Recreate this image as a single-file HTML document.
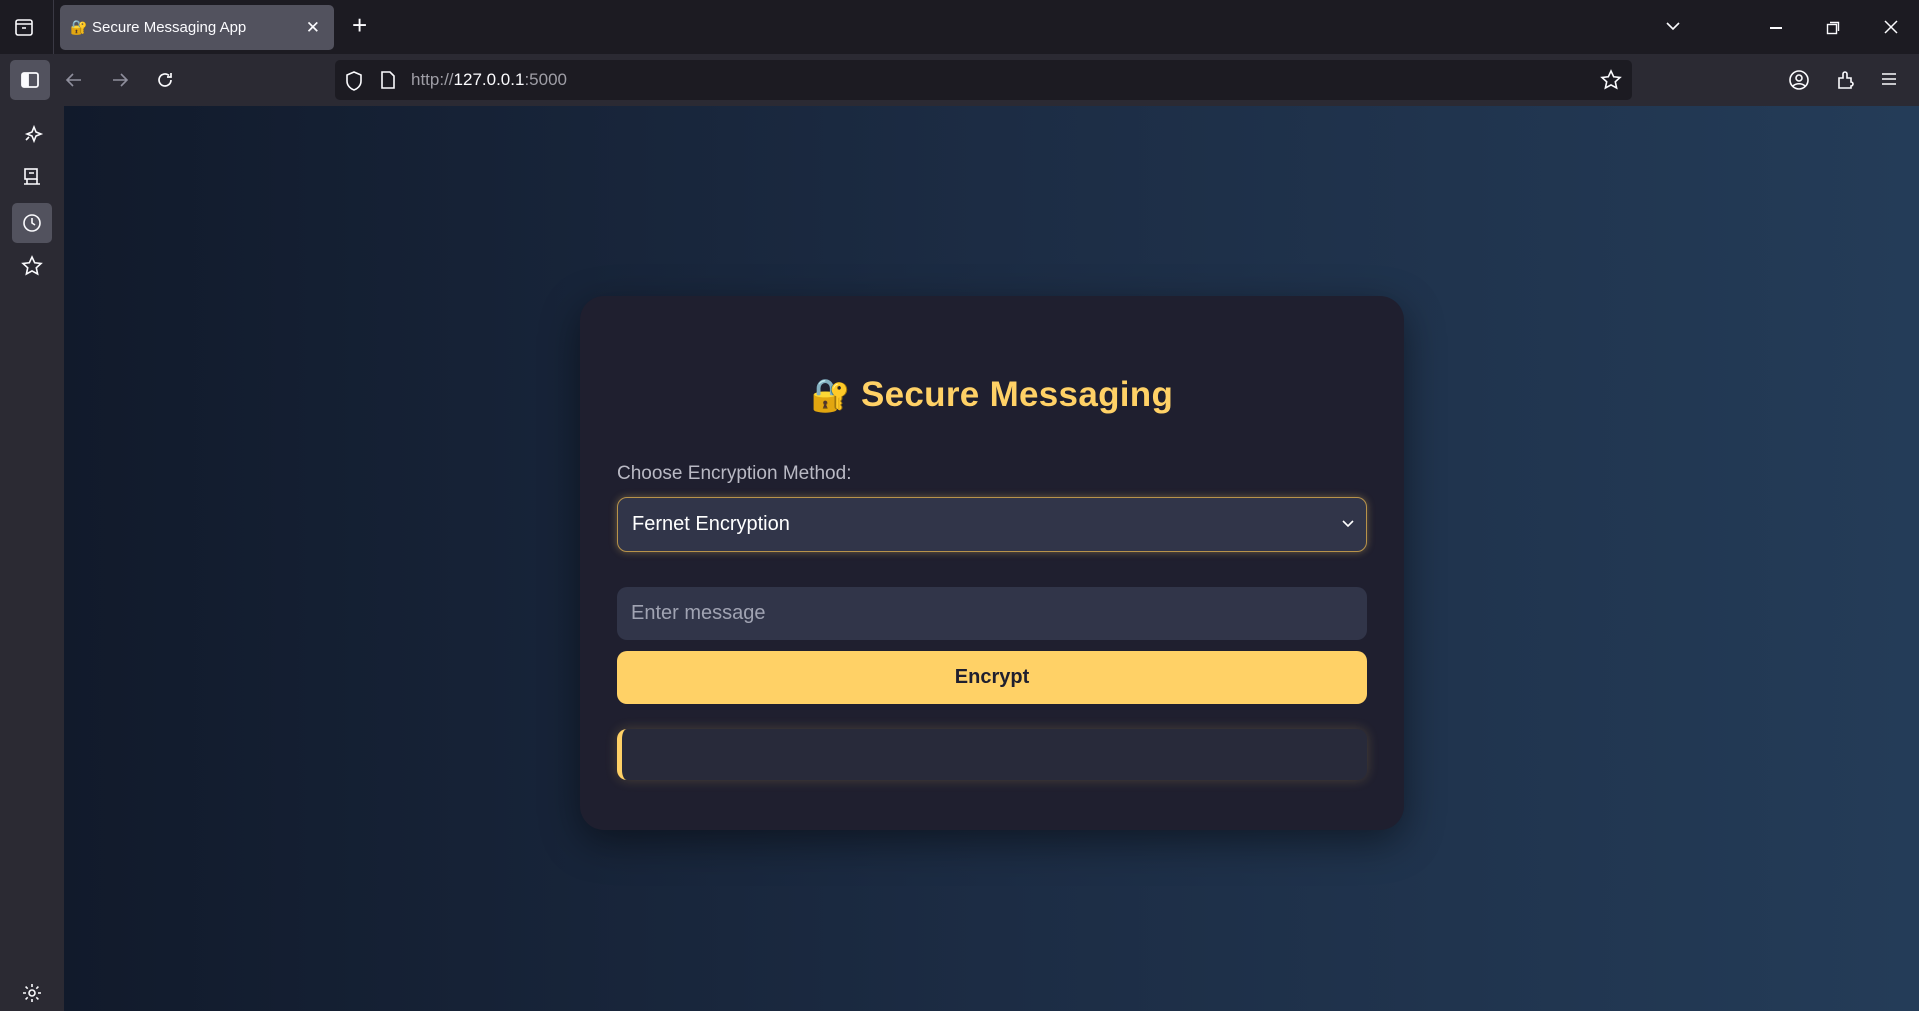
<!DOCTYPE html>
<html><head><meta charset="utf-8"><style>
*{box-sizing:border-box;margin:0;padding:0}
body{width:1919px;height:1011px;overflow:hidden;background:#1c1b22;font-family:"Liberation Sans",sans-serif;position:relative}
.tabbar{position:absolute;left:0;top:0;width:1919px;height:54px;background:#1c1b22}
.tab{position:absolute;left:60px;top:5px;width:274px;height:45px;background:#52525e;border-radius:5px;color:#fbfbfe;font-size:15px;line-height:45px;padding-left:32px}
.nav{position:absolute;left:0;top:54px;width:1919px;height:52px;background:#2b2a33}
.url{position:absolute;left:335px;top:6px;width:1297px;height:40px;background:#1c1b22;border-radius:5px;color:#9f9ea6;font-size:17px;line-height:40px;padding-left:76px}
.side{position:absolute;left:0;top:106px;width:64px;height:905px;background:#2b2a33}
.main{position:absolute;left:64px;top:106px;width:1855px;height:905px;background:linear-gradient(90deg,#111a2b,#1c2c44 50%,#243c58)}
.card{position:absolute;left:516px;top:190px;width:824px;height:534px;background:#1f1f2f;border-radius:24px;box-shadow:0 12px 40px rgba(0,0,0,.45)}
h1{position:absolute;left:0;width:100%;top:79px;text-align:center;color:#ffd166;font-size:35px;font-weight:bold;font-family:"Liberation Sans",sans-serif;letter-spacing:0.3px}
.lbl{position:absolute;left:37px;top:167px;color:#b9b9c4;font-size:19px}
.sel{position:absolute;left:37px;top:201px;width:750px;height:55px;background:#313549;border:1.5px solid #b8934a;border-radius:10px;box-shadow:0 0 8px rgba(255,209,102,.35);color:#fff;font-size:20px;line-height:52px;padding-left:14px}
.inp{position:absolute;left:37px;top:291px;width:750px;height:53px;background:#313549;border-radius:10px;color:#a0a3b2;font-size:20px;line-height:53px;padding-left:14px}
.btn{position:absolute;left:37px;top:355px;width:750px;height:53px;background:#ffd166;border-radius:10px;color:#1f1f2f;font-size:20px;font-weight:bold;text-align:center;line-height:53px}
.out{position:absolute;left:37px;top:433px;width:750px;height:51px;background:#282a3a;border-left:5px solid #ffd166;border-radius:10px;box-shadow:0 0 12px rgba(255,209,102,.2)}
svg{position:absolute}
</style></head><body>
<div class="tabbar">
<svg style="left:14px;top:17px" width="20" height="20" viewBox="0 0 20 20" fill="none" stroke="#fbfbfe" stroke-width="1.6"><rect x="2" y="3" width="16" height="15" rx="2"/><path d="M2 7h16M8 11h4"/></svg>
<div style="position:absolute;left:53px;top:0;width:1px;height:54px;background:#3a3944"></div>
<div class="tab"><span style="position:absolute;left:10px;top:0;font-size:14px">🔐</span>Secure Messaging App<span style="position:absolute;right:14px;top:0;font-size:17px">✕</span></div>
<div style="position:absolute;left:352px;top:10px;color:#fbfbfe;font-size:26px">+</div>
<svg style="left:1665px;top:20px" width="16" height="12" viewBox="0 0 16 12" fill="none" stroke="#fbfbfe" stroke-width="1.6"><path d="M2 3l6 6 6-6"/></svg>
<div style="position:absolute;left:1770px;top:27px;width:12px;height:1.5px;background:#fbfbfe"></div>
<svg style="left:1826px;top:21px" width="14" height="14" viewBox="0 0 14 14" fill="none" stroke="#fbfbfe" stroke-width="1.4"><rect x="1.5" y="3.5" width="9" height="9"/><path d="M4 1.5h8.5V10"/></svg>
<svg style="left:1884px;top:20px" width="14" height="14" viewBox="0 0 14 14" stroke="#fbfbfe" stroke-width="1.5"><path d="M1 1l12 12M13 1L1 13"/></svg>
</div>
<div class="nav">
<div style="position:absolute;left:10px;top:6px;width:40px;height:40px;background:#52525e;border-radius:5px"></div>
<svg style="left:20px;top:16px" width="20" height="20" viewBox="0 0 20 20" fill="none" stroke="#fbfbfe" stroke-width="1.8"><rect x="2" y="3" width="16" height="14" rx="2"/><rect x="3" y="4" width="5" height="12" fill="#fbfbfe"/></svg>
<svg style="left:64px;top:16px" width="20" height="20" viewBox="0 0 20 20" fill="none" stroke="#8f8f9d" stroke-width="1.6"><path d="M17 10H3M9 4l-6 6 6 6"/></svg>
<svg style="left:110px;top:16px" width="20" height="20" viewBox="0 0 20 20" fill="none" stroke="#8f8f9d" stroke-width="1.6"><path d="M3 10h14M11 4l6 6-6 6"/></svg>
<svg style="left:155px;top:16px" width="20" height="20" viewBox="0 0 20 20" fill="none" stroke="#fbfbfe" stroke-width="1.7"><path d="M16 10a6 6 0 1 1-2-4.5M16 3v4h-4"/></svg>
<div class="url"><span>http://</span><span style="color:#fbfbfe">127.0.0.1</span>:5000</div>
<svg style="left:344px;top:16px" width="20" height="22" viewBox="0 0 20 22" fill="none" stroke="#fbfbfe" stroke-width="1.6"><path d="M10 2l7 3v6c0 5-4 8-7 9-3-1-7-4-7-9V5z"/></svg>
<svg style="left:380px;top:16px" width="16" height="20" viewBox="0 0 16 20" fill="none" stroke="#fbfbfe" stroke-width="1.6"><path d="M2 2h8l4 4v12H2z"/></svg>
<svg style="left:1600px;top:15px" width="22" height="22" viewBox="0 0 22 22" fill="none" stroke="#fbfbfe" stroke-width="1.6"><path d="M11 2l2.7 5.8 6.3.7-4.7 4.3 1.3 6.2L11 15.9 5.4 19l1.3-6.2L2 8.5l6.3-.7z"/></svg>
<svg style="left:1788px;top:15px" width="22" height="22" viewBox="0 0 22 22" fill="none" stroke="#fbfbfe" stroke-width="1.6"><circle cx="11" cy="11" r="9"/><circle cx="11" cy="9" r="3"/><path d="M5 17c3-3 9-3 12 0"/></svg>
<svg style="left:1835px;top:15px" width="22" height="22" viewBox="0 0 22 22" fill="none" stroke="#fbfbfe" stroke-width="1.6"><path d="M4 19V9h4V5a2 2 0 0 1 4 0v4h4v4a2 2 0 0 1 0 4v2z"/></svg>
<svg style="left:1880px;top:17px" width="18" height="16" viewBox="0 0 18 16" stroke="#fbfbfe" stroke-width="1.6"><path d="M2 3h14M2 8h14M2 13h14"/></svg>
</div>
<div class="side">
<svg style="left:22px;top:17px" width="22" height="22" viewBox="0 0 22 22" fill="none" stroke="#fbfbfe" stroke-width="1.6"><path d="M12 4l2 5 5 2-5 2-2 5-2-5-5-2 5-2zM4 17l3-3"/></svg>
<svg style="left:22px;top:61px" width="20" height="20" viewBox="0 0 20 20" fill="none" stroke="#fbfbfe" stroke-width="1.6"><rect x="3" y="2" width="12" height="10"/><path d="M2 17h16M5 12v5M15 12v5M7 6h5"/></svg>
<div style="position:absolute;left:12px;top:97px;width:40px;height:40px;background:#52525e;border-radius:5px"></div>
<svg style="left:22px;top:107px" width="20" height="20" viewBox="0 0 20 20" fill="none" stroke="#fbfbfe" stroke-width="1.6"><circle cx="10" cy="10" r="8"/><path d="M10 5v5l3 2"/></svg>
<svg style="left:21px;top:149px" width="22" height="22" viewBox="0 0 22 22" fill="none" stroke="#fbfbfe" stroke-width="1.6"><path d="M11 2l2.7 5.8 6.3.7-4.7 4.3 1.3 6.2L11 15.9 5.4 19l1.3-6.2L2 8.5l6.3-.7z"/></svg>
<svg style="left:21px;top:876px" width="22" height="22" viewBox="0 0 22 22" fill="none" stroke="#fbfbfe" stroke-width="1.6"><circle cx="11" cy="11" r="3"/><path d="M11 2v3M11 17v3M2 11h3M17 11h3M4.6 4.6l2.1 2.1M15.3 15.3l2.1 2.1M4.6 17.4l2.1-2.1M15.3 6.7l2.1-2.1"/></svg>
</div>
<div class="main">
<div class="card">
<h1><span style="font-size:32px">🔐</span> Secure Messaging</h1>
<div class="lbl">Choose Encryption Method:</div>
<div class="sel">Fernet Encryption
<svg style="right:12px;top:22px" width="12" height="8" viewBox="0 0 12 8" fill="none" stroke="#fff" stroke-width="1.6"><path d="M1 1l5 5 5-5"/></svg></div>
<div class="inp">Enter message</div>
<div class="btn">Encrypt</div>
<div class="out"></div>
</div>
</div>
</body></html>
